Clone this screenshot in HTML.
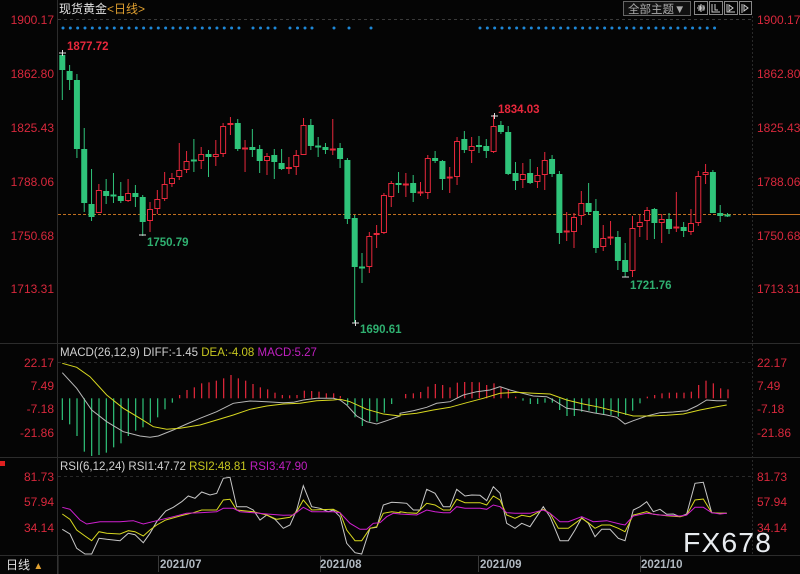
<!DOCTYPE html>
<html><head><meta charset="utf-8">
<style>
html,body{margin:0;padding:0;background:#000;}
body{width:800px;height:574px;overflow:hidden;position:relative;font-family:"Liberation Sans","Noto Sans CJK SC",sans-serif;}
svg{position:absolute;left:0;top:0;}
</style></head>
<body>
<svg id="s" width="800" height="574" viewBox="0 0 800 574" xmlns="http://www.w3.org/2000/svg">
<rect width="800" height="574" fill="#050505"/>
<g stroke="#2c2c2c" stroke-width="1">
<line x1="57.5" y1="0" x2="57.5" y2="574"/>
<line x1="0" y1="343.5" x2="800" y2="343.5"/>
<line x1="0" y1="457.5" x2="800" y2="457.5"/>
<line x1="0" y1="555.5" x2="800" y2="555.5"/>
</g>
<line x1="752.5" y1="16" x2="752.5" y2="555" stroke="#2a2a2a" stroke-dasharray="2,2"/>
<g stroke="#2a2a2a" stroke-dasharray="3,3">
<line x1="58" y1="19.5" x2="752" y2="19.5" stroke="#3a3a3a"/>
<line x1="58" y1="362.5" x2="752" y2="362.5"/>
<line x1="58" y1="476.5" x2="752" y2="476.5"/>
</g>
<g stroke="#3a3a3a"><line x1="58" y1="555" x2="58" y2="574"/><line x1="158.5" y1="556" x2="158.5" y2="572"/><line x1="320.5" y1="556" x2="320.5" y2="572"/><line x1="478.5" y1="556" x2="478.5" y2="572"/><line x1="640.5" y1="556" x2="640.5" y2="572"/></g>
<line x1="58" y1="214.5" x2="752" y2="214.5" stroke="#c07020" stroke-dasharray="3,2"/>
<line x1="752" y1="214.5" x2="800" y2="214.5" stroke="#c07020"/>
<g id="dots" fill="#1e88d8"></g>
<g id="macd"></g>
<g id="candles"></g>
<g id="lines" fill="none" stroke-width="1"></g>

<text x="59" y="13" font-size="12" fill="#e0e0e0">现货黄金<tspan fill="#e0a030">&lt;日线&gt;</tspan></text>
<rect x="623.5" y="1.5" width="67" height="14" fill="#111" stroke="#666"/>
<text x="628" y="13" font-size="11.5" fill="#aaa">全部主题▼</text>
<g stroke="#888" fill="none">
<rect x="694.5" y="1.5" width="13" height="13"/><rect x="709.5" y="1.5" width="13" height="13"/><rect x="724.5" y="1.5" width="13" height="13"/><rect x="739.5" y="1.5" width="12" height="13"/>
<path d="M701 4v8M697 8h8M698 6h2v4h-2M702 6h2v4h-2" stroke="#ccc"/>
<path d="M712 4v8h8M715 4v6h3" stroke="#ccc"/>
<path d="M727 4v8h8M729 5l4 3-4 3z" stroke="#ccc"/>
<path d="M742 4v9M744 5l4 3-4 3z" stroke="#ccc"/>
</g>
<g font-size="12" fill="#d8283c">
<g text-anchor="end">
<text x="54" y="24">1900.17</text><text x="54" y="78">1862.80</text><text x="54" y="132">1825.43</text><text x="54" y="186">1788.06</text><text x="54" y="240">1750.68</text><text x="54" y="293">1713.31</text>
<text x="54" y="367">22.17</text><text x="54" y="390">7.49</text><text x="54" y="413">-7.18</text><text x="54" y="437">-21.86</text>
<text x="54" y="481">81.73</text><text x="54" y="506">57.94</text><text x="54" y="532">34.14</text>
</g>
<text x="757" y="24">1900.17</text><text x="757" y="78">1862.80</text><text x="757" y="132">1825.43</text><text x="757" y="186">1788.06</text><text x="757" y="240">1750.68</text><text x="757" y="293">1713.31</text>
<text x="757" y="367">22.17</text><text x="757" y="390">7.49</text><text x="757" y="413">-7.18</text><text x="757" y="437">-21.86</text>
<text x="757" y="481">81.73</text><text x="757" y="506">57.94</text><text x="757" y="532">34.14</text>
</g>
<g font-size="11.5" font-weight="bold">
<text x="67" y="50" fill="#e8283c">1877.72</text>
<text x="147" y="246" fill="#2fb070">1750.79</text>
<text x="360" y="333" fill="#2fb070">1690.61</text>
<text x="498" y="113" fill="#e8283c">1834.03</text>
<text x="630" y="289" fill="#2fb070">1721.76</text>
</g>
<g stroke="#ddd"><path d="M59 53h7M62.5 50v6M139 235h7M352 323h7M355.5 320v6M491 116h7M494.5 113v6M622 277h7"/></g>
<text x="60" y="356" font-size="11.5" fill="#d0d0d0">MACD(26,12,9) DIFF:-1.45 <tspan fill="#c8c820">DEA:-4.08</tspan> <tspan fill="#c020c0">MACD:5.27</tspan></text>
<text x="60" y="470" font-size="11.5" fill="#d0d0d0">RSI(6,12,24) RSI1:47.72 <tspan fill="#c8c820">RSI2:48.81</tspan> <tspan fill="#c020c0">RSI3:47.90</tspan></text>
<rect x="0" y="461" width="5" height="5" fill="#e02020"/>
<g font-size="11.5" font-weight="bold" fill="#b0b8c0">
<text x="160" y="568">2021/07</text><text x="320" y="568">2021/08</text><text x="480" y="568">2021/09</text><text x="641" y="568">2021/10</text>
</g>
<text x="6" y="569" font-size="12" fill="#e0e0e0">日线 <tspan fill="#e0a030" font-size="10">▲</tspan></text>
<text x="683" y="552" font-size="28" fill="#e8ecf0" letter-spacing="1" textLength="89" lengthAdjust="spacingAndGlyphs">FX678</text>
</svg>
<script>
var NS="http://www.w3.org/2000/svg";
function el(p,t,a){var e=document.createElementNS(NS,t);for(var k in a)e.setAttribute(k,a[k]);document.getElementById(p).appendChild(e);return e;}
for(var x=63;x<=240;x+=7.33)el("dots","circle",{cx:x,cy:28,r:1.5});
[253,260.5,268,275,290,297.5,305,312,334,349,371].forEach(function(x){el("dots","circle",{cx:x,cy:28,r:1.5});});
for(var x=480;x<=716;x+=7.33)el("dots","circle",{cx:x,cy:28,r:1.5});
var C=[[55,70,53,100],[71,80,65,90],[80,149,74,158],[149,203,128,212],[204,217,169,221],[213,190,184,213],[191,196,179,204],[195,196,173,203],[196,201,182,203],[201,193,179,202],[193,197,185,207],[197,222,195,236],[221,209,202,232],[209,199,190,214],[199,184,172,201],[184,178,173,187],[177,170,143,180],[170,161,151,173],[160,161,139,172],[161,154,147,169],[154,157,150,177],[157,154,140,166],[154,126,123,157],[125,123,117,135],[123,149,119,151],[149,148,140,172],[147,150,129,157],[149,161,145,173],[161,156,153,175],[155,162,149,179],[163,169,149,170],[169,167,157,174],[167,155,150,175],[155,125,118,155],[125,146,119,150],[146,147,137,157],[147,150,143,154],[150,149,119,155],[148,159,143,168],[160,219,158,224],[218,267,215,323],[267,268,253,283],[267,236,232,273],[235,233,225,248],[233,195,193,234],[197,183,181,207],
[183,185,172,193],[185,184,173,197],[183,193,175,202],[193,192,182,196],[193,158,155,199],[158,161,151,163],[161,179,160,190],[178,177,167,193],[177,141,137,185],[139,150,131,153],[151,146,137,163],[145,147,136,153],[146,151,139,158],[152,126,115,153],[125,132,121,134],[132,174,126,175],[173,181,162,190],[180,174,163,188],[173,183,159,184],[182,175,167,188],[175,160,152,190],[159,174,155,177],[174,233,171,244],[232,231,212,241],[232,217,213,248],[216,203,191,225],[203,212,183,215],[211,248,199,253],[247,238,225,251],[238,237,221,245],[237,261,231,270],[260,272,243,277],[271,228,216,277],[227,222,215,237],[221,210,207,240],[209,223,208,239],[223,219,214,243],[219,229,213,234],[228,227,192,232],[227,231,222,237],[232,223,209,235],[223,176,171,226],[175,172,164,184],[172,213,170,213],[213,216,205,222],[215,215,213,217]];
C.forEach(function(c,i){var x=62.3+i*7.31;var up=c[1]<c[0];var col=up?"#e8283c":"#2fc47a";
var t=Math.min(c[0],c[1]),b=Math.max(c[0],c[1]);
el("candles","line",{x1:x,y1:c[2],x2:x,y2:t,stroke:col});el("candles","line",{x1:x,y1:b,x2:x,y2:c[3],stroke:col});
if(b-t<1.5){el("candles","line",{x1:x-3,y1:t+0.5,x2:x+3,y2:t+0.5,stroke:col,"stroke-width":2});}
else if(up)el("candles","rect",{x:x-2.5,y:t+0.5,width:5,height:b-t-1,fill:"#050505",stroke:col});
else el("candles","rect",{x:x-3,y:t,width:6,height:b-t,fill:col});});
var zero=398.3;
function bars(off,arr){for(var i=0;i<arr.length;i+=2){var x=off+arr[i]/3,y=330+arr[i+1]/3;var col=y<zero?"#e8283c":"#2fc47a";el("macd","line",{x1:x,y1:zero,x2:x,y2:y,stroke:col,"stroke-width":1.2});}}
bars(0,[187,270,209,283,231,318,253,365,275,378,297,375,319,368,341,352,363,340,385,318,407,302,429,292,451,278,473,262,495,238,517,218,539,195,561,180,583,172,605,160,627,157,649,152,671,145,693,135,715,145,737,152,759,162,781,172,803,178,825,188,847,195,869,196,891,195,913,182,935,183,957,185,979,190,1001,190,1021,198,1043,225,1065,262,1087,288,1109,275,1131,275,1153,248,1175,222,1197,205]);
bars(400,[17,192,40,190,62,186,84,170,106,162,128,165,150,172,172,158,194,156,216,156,238,157,260,165,282,160,303,170,325,180,347,200,369,212,391,222,413,222,435,218,457,218,479,240,501,258,523,258,545,245,567,242,589,250,611,255,633,255,655,260,677,255,698,242,720,220,742,200,764,195,786,190,808,188,830,188,852,188,874,185,896,165,918,152,940,160,962,175,984,178]);
function line(a,b,col){var p=[];a.forEach(function(q){p.push((q[0]/3).toFixed(1)+","+(330+q[1]/3).toFixed(1));});b.forEach(function(q){p.push((400+q[0]/3).toFixed(1)+","+(330+q[1]/3).toFixed(1));});el("lines","polyline",{points:p.join(" "),stroke:col});}
line([[187,128],[230,175],[275,240],[320,275],[370,305],[420,318],[450,322],[475,318],[520,300],[560,282],[600,265],[650,245],[700,220],[750,213],[800,215],[850,218],[880,217],[910,210],[950,205],[1000,205],[1020,210],[1040,225],[1070,258],[1100,275],[1130,282],[1160,272],[1200,258]],[[0,250],[40,242],[80,232],[110,220],[150,215],[190,195],[230,185],[270,180],[300,170],[330,180],[360,188],[400,198],[440,200],[460,210],[500,235],[540,240],[580,248],[620,255],[650,262],[675,282],[700,272],[740,258],[780,248],[820,246],[860,242],[890,228],[920,210],[950,212],[980,212]],"#b8b8b8");
line([[187,100],[230,112],[270,140],[320,195],[370,235],[420,265],[460,290],[500,298],[540,295],[600,285],[650,270],[700,255],[750,238],[800,228],[850,222],[900,220],[950,212],[1000,210],[1020,208],[1050,215],[1100,238],[1150,252],[1200,258]],[[0,255],[50,250],[100,240],[150,232],[200,218],[250,205],[300,190],[350,187],[400,190],[450,192],[500,210],[550,222],[600,232],[650,245],[700,258],[750,258],[800,256],[850,252],[900,240],[950,230],[980,225]],"#d8d820");
line([[187,598],[210,612],[230,655],[255,672],[275,672],[297,625],[320,628],[360,632],[385,610],[405,614],[430,638],[450,610],[470,575],[497,543],[520,532],[545,515],[565,498],[585,505],[605,486],[630,495],[650,490],[670,445],[690,442],[710,530],[740,530],[760,540],[780,570],[800,555],[825,568],[850,595],[870,585],[890,540],[910,467],[935,530],[960,535],[985,545],[1000,540],[1020,560],[1040,640],[1065,668],[1085,672],[1110,595],[1130,592],[1150,525],[1175,517],[1200,518]],[[0,518],[20,520],[40,540],[60,540],[80,478],[105,490],[130,530],[150,530],[170,478],[195,498],[215,495],[240,496],[260,512],[280,470],[300,490],[320,580],[345,595],[365,580],[390,590],[430,530],[450,560],[480,632],[505,632],[525,600],[545,563],[565,580],[585,620],[605,598],[630,598],[655,625],[675,632],[700,540],[720,530],[740,515],[760,545],[780,538],[800,553],[820,552],[840,560],[860,552],[885,460],[910,457],[935,548],[960,550],[980,550]],"#c8c8c8");
line([[187,552],[210,568],[230,600],[255,618],[275,632],[297,605],[320,610],[360,612],[385,602],[405,605],[430,618],[450,600],[470,585],[497,570],[540,558],[580,548],[605,540],[650,540],[670,510],[690,508],[710,540],[760,545],[800,555],[830,568],[870,562],[890,545],[910,510],[935,540],[1000,538],[1020,548],[1040,600],[1065,632],[1085,632],[1110,595],[1130,590],[1150,550],[1175,545],[1200,548]],[[0,545],[20,548],[50,550],[80,520],[105,525],[130,540],[150,540],[170,508],[195,518],[240,518],[260,525],[280,498],[300,510],[320,555],[345,565],[365,556],[390,560],[430,538],[450,550],[475,595],[505,595],[525,580],[545,565],[565,578],[585,595],[605,585],[630,585],[655,595],[675,605],[700,555],[740,545],[760,553],[800,557],[840,560],[860,555],[885,510],[910,507],[935,548],[960,550],[980,550]],"#d8d820");
line([[187,532],[210,538],[240,570],[260,582],[300,575],[360,575],[400,572],[430,582],[470,572],[520,560],[560,550],[600,548],[650,545],[670,535],[700,535],[720,545],[760,548],[800,552],[850,556],[880,555],[910,532],[935,545],[1000,545],[1020,548],[1050,580],[1080,598],[1100,598],[1120,580],[1140,578],[1160,560],[1180,550],[1200,552]],[[0,552],[50,555],[80,540],[105,545],[130,548],[150,548],[170,530],[195,535],[240,535],[260,538],[280,525],[300,530],[320,548],[345,550],[390,550],[430,540],[450,550],[480,575],[505,575],[545,560],[580,575],[620,572],[660,582],[675,585],[700,558],[740,550],[780,555],[840,558],[860,555],[885,532],[910,532],[935,548],[960,552],[980,550]],"#d020d0");
</script>
</body></html>
